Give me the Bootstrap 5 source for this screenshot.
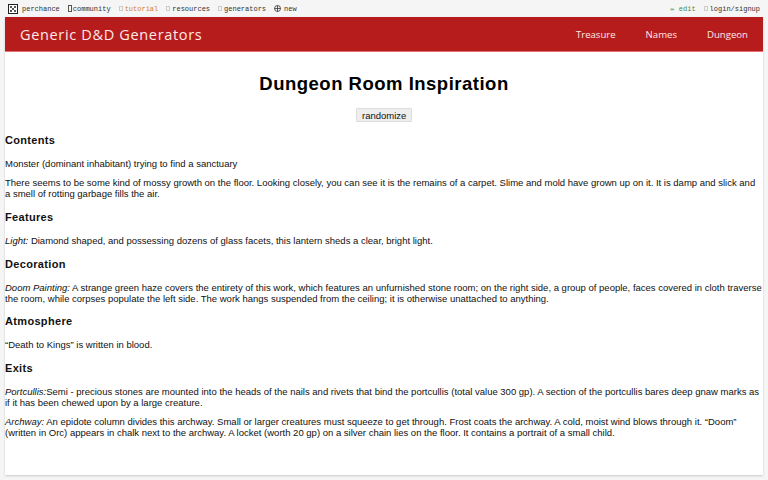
<!DOCTYPE html>
<html lang="en">
<head>
<meta charset="utf-8">
<title>Generic D&amp;D Generators</title>
<link href="https://cdn.jsdelivr.net/npm/bootstrap@5.3.0/dist/css/bootstrap.min.css" rel="stylesheet">
<style>
html,body{height:480px;overflow:hidden}
body{background:#f5f5f5;font-family:"Liberation Sans",Arial,sans-serif;color:#111;font-size:9.5px;line-height:11px}
.topbar{height:17px;padding:0 8px 0 8px;font-family:"Liberation Mono",monospace;font-size:7px;line-height:16px;color:#333}
.topbar span.tofu{display:inline-block;width:4px;height:7px;border:1px solid #555;vertical-align:-1px;margin-right:1px}
.topbar .tofu.faint{border-color:#ccc;height:5px;vertical-align:0;margin-right:2px}
.topgroup{gap:8px}
.tut{color:#d2813a}
.edt{color:#4a8a4a}
.globe{vertical-align:-1px;margin-right:3px}
.sheet{margin:0 5px;width:758px;height:458px;background:#fff;box-shadow:0 1px 2px rgba(0,0,0,.18)}
.redbar{height:35px;background:#b71c1c;border-bottom:1px solid #e57373;padding:0 15px;font-family:"Open Sans",sans-serif;color:#fde8e8}
.brandname{font-size:14.5px;letter-spacing:.66px}
.navgroup{font-size:9.6px;gap:30px}
.pagetitle{font-size:18.5px;line-height:24px;font-weight:700;letter-spacing:.5px;text-align:center;margin:20px 0 12px;color:#000}
.rollbtn{font-size:9.5px;line-height:11px;padding:0 5px;background:#eee;border:1px solid #ddd;border-radius:1px;color:#111;height:14px;width:56px}
.sect{font-size:11px;line-height:13px;font-weight:700;letter-spacing:.33px;margin:11.6px 0 11px}
.leadsect{margin-top:11.9px}
.para{margin:0 0 8.5px}
</style>
</head>
<body>
<div class="topbar d-flex justify-content-between align-items-center">
  <div class="d-flex align-items-center topgroup">
    <span class="d-flex align-items-center"><svg width="10" height="10" viewBox="0 0 10 10" class="me-1"><rect x=".5" y=".5" width="9" height="9" fill="#fff" stroke="#222"/><circle cx="3" cy="3" r="1" fill="#222"/><circle cx="7" cy="3" r="1" fill="#222"/><circle cx="5" cy="5" r="1" fill="#222"/><circle cx="3" cy="7" r="1" fill="#222"/><circle cx="7" cy="7" r="1" fill="#222"/></svg>perchance</span>
    <span><span class="tofu"></span>community</span>
    <span class="tut"><span class="tofu faint"></span>tutorial</span>
    <span><span class="tofu faint"></span>resources</span>
    <span><span class="tofu faint"></span>generators</span>
    <span><svg class="globe" width="7" height="7" viewBox="0 0 7 7"><circle cx="3.5" cy="3.5" r="3" fill="none" stroke="#333" stroke-width=".8"/><path d="M.5 3.5h6M3.5.5v6" stroke="#333" stroke-width=".8"/></svg>new</span>
  </div>
  <div class="d-flex align-items-center gap-2">
    <span class="edt">✏ edit</span>
    <span><span class="tofu faint"></span>login/signup</span>
  </div>
</div>
<div class="sheet">
  <div class="redbar d-flex justify-content-between align-items-center">
    <div class="brandname">Generic D&amp;D Generators</div>
    <div class="d-flex navgroup"><span>Treasure</span><span>Names</span><span>Dungeon</span></div>
  </div>
  <h1 class="pagetitle">Dungeon Room Inspiration</h1>
  <div class="text-center"><button class="rollbtn" type="button">randomize</button></div>
  <h2 class="sect leadsect">Contents</h2>
  <p class="para">Monster (dominant inhabitant) trying to find a sanctuary</p>
  <p class="para">There seems to be some kind of mossy growth on the floor. Looking closely, you can see it is the remains of a carpet. Slime and mold have grown up on it. It is damp and slick and a smell of rotting garbage fills the air.</p>
  <h2 class="sect">Features</h2>
  <p class="para"><em>Light:</em> Diamond shaped, and possessing dozens of glass facets, this lantern sheds a clear, bright light.</p>
  <h2 class="sect">Decoration</h2>
  <p class="para"><em>Doom Painting:</em> A strange green haze covers the entirety of this work, which features an unfurnished stone room; on the right side, a group of people, faces covered in cloth traverse the room, while corpses populate the left side. The work hangs suspended from the ceiling; it is otherwise unattached to anything.</p>
  <h2 class="sect">Atmosphere</h2>
  <p class="para">“Death to Kings” is written in blood.</p>
  <h2 class="sect">Exits</h2>
  <p class="para"><em>Portcullis:</em>Semi - precious stones are mounted into the heads of the nails and rivets that bind the portcullis (total value 300 gp). A section of the portcullis bares deep gnaw marks as if it has been chewed upon by a large creature.</p>
  <p class="para"><em>Archway:</em> An epidote column divides this archway. Small or larger creatures must squeeze to get through. Frost coats the archway. A cold, moist wind blows through it. “Doom” (written in Orc) appears in chalk next to the archway. A locket (worth 20 gp) on a silver chain lies on the floor. It contains a portrait of a small child.</p>
</div>
<script src="https://cdn.jsdelivr.net/npm/bootstrap@5.3.0/dist/js/bootstrap.bundle.min.js"></script>
</body>
</html>
